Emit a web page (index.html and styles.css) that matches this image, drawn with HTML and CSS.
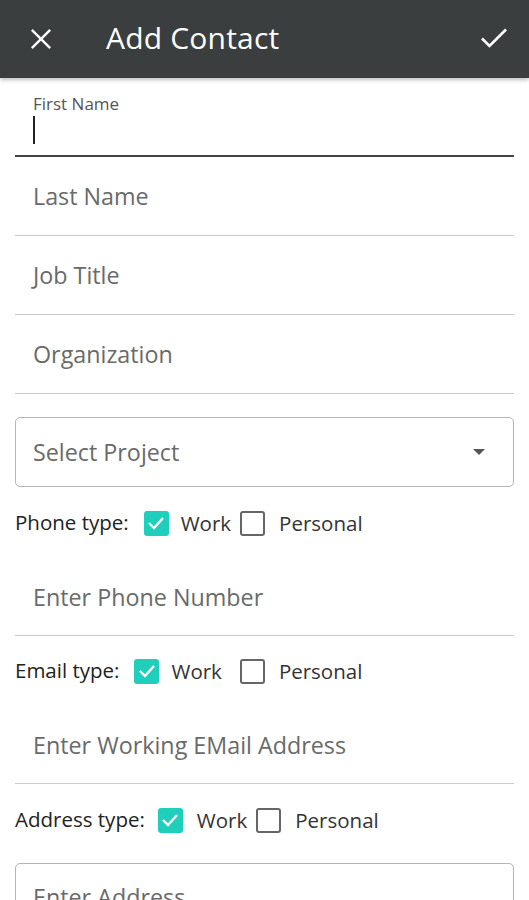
FILE: index.html
```html
<!DOCTYPE html>
<html>
<head>
<meta charset="utf-8">
<link rel="stylesheet" href="styles.css">
</head>
<body>
<header class="appbar">
  <span class="icon-btn close">
    <svg width="24" height="24" viewBox="0 0 24 24"><path d="M2 2 L22 22 M22 2 L2 22" stroke="#fff" stroke-width="2.6" fill="none"/></svg>
  </span>
  <h1 class="title">Add Contact</h1>
  <span class="icon-btn done">
    <svg width="28" height="22" viewBox="0 0 28 22"><path d="M2 11.5 L9.5 19 L26 2.5" stroke="#fff" stroke-width="2.6" fill="none"/></svg>
  </span>
</header>
<main class="form">
  <div class="field active">
    <div class="float-label">First Name</div>
    <div class="caret"></div>
  </div>
  <div class="field"><span class="ph">Last Name</span></div>
  <div class="field"><span class="ph">Job Title</span></div>
  <div class="field"><span class="ph">Organization</span></div>

  <div class="select">
    <span class="ph">Select Project</span>
    <svg class="arrow" width="12" height="6" viewBox="0 0 12 6"><path d="M0 0 L12 0 L6 6 Z" fill="#555"/></svg>
  </div>

  <div class="type-row phone">
    <span class="type-label">Phone type:</span>
    <span class="cb on"><svg width="18" height="14" viewBox="0 0 18 14"><path d="M2 7 L7 12 L16 2" stroke="#fff" stroke-width="2.4" fill="none"/></svg></span>
    <span class="opt work">Work</span>
    <span class="cb off"></span>
    <span class="opt personal">Personal</span>
  </div>
  <div class="field fld2"><span class="ph">Enter Phone Number</span></div>

  <div class="type-row email">
    <span class="type-label">Email type:</span>
    <span class="cb on"><svg width="18" height="14" viewBox="0 0 18 14"><path d="M2 7 L7 12 L16 2" stroke="#fff" stroke-width="2.4" fill="none"/></svg></span>
    <span class="opt work">Work</span>
    <span class="cb off"></span>
    <span class="opt personal">Personal</span>
  </div>
  <div class="field fld2"><span class="ph">Enter Working EMail Address</span></div>

  <div class="type-row address">
    <span class="type-label">Address type:</span>
    <span class="cb on"><svg width="18" height="14" viewBox="0 0 18 14"><path d="M2 7 L7 12 L16 2" stroke="#fff" stroke-width="2.4" fill="none"/></svg></span>
    <span class="opt work">Work</span>
    <span class="cb off"></span>
    <span class="opt personal">Personal</span>
  </div>
  <div class="textarea"><span class="ph">Enter Address</span></div>
</main>
</body>
</html>
```
FILE: styles.css
```css
* { box-sizing: border-box; }
html, body { margin: 0; padding: 0; background: #fff; }
body {
  font-family: "Open Sans", "Noto Sans", sans-serif;
  width: 529px;
  height: 900px;
  overflow: hidden;
}
.appbar {
  height: 78px;
  background: #3b3e3f;
  display: flex;
  align-items: center;
  padding: 0 21px 0 30px;
  box-shadow: 0 2px 4px rgba(0,0,0,0.25);
  position: relative;
}
.icon-btn { display: flex; align-items: center; }
.close svg { width: 22px; height: 22px; }
.title {
  margin: 0 0 0 54px;
  flex: 1;
  color: #fff;
  font-weight: 400;
  font-size: 30px;
  letter-spacing: 0.2px;
  line-height: 1;
  padding-bottom: 2px;
}
.done { padding-bottom: 2px; }
.form { padding: 0 15px; height: 822px; overflow: hidden; }
.field {
  height: 79px;
  border-bottom: 1.5px solid #cbcbcb;
  display: flex;
  align-items: center;
  padding-left: 18px;
}
.field.active {
  flex-direction: column;
  align-items: flex-start;
  justify-content: flex-start;
  border-bottom: 2.5px solid #444;
  padding-top: 15px;
}
.float-label {
  font-size: 17px;
  color: #555;
  line-height: 22px;
}
.caret {
  width: 2px;
  height: 28px;
  background: #222;
  margin-top: 1px;
}
.ph {
  font-size: 23.3px;
  color: #6a6a6a;
}
.select {
  margin-top: 23px;
  height: 70px;
  border: 1.5px solid #b5b5b5;
  border-radius: 5px;
  display: flex;
  align-items: center;
  justify-content: space-between;
  padding: 0 28px 0 17px;
}
.type-row {
  display: flex;
  align-items: center;
  height: 48px;
  margin-top: 12px;
}
.type-label {
  font-size: 20.5px;
  color: #222;
  margin-right: 15px;
  padding-bottom: 3px;
}
.cb {
  width: 25px;
  height: 25px;
  border-radius: 3px;
  display: flex;
  align-items: center;
  justify-content: center;
  flex: none;
}
.cb.on { background: #20cfbb; }
.cb.off { border: 2px solid #666; }
.opt {
  font-size: 20.5px;
  color: #333;
}
.work { margin-left: 12px; margin-right: 9px; }
.personal { margin-left: 14px; }
.email { margin-top: 11px; }
.email .work { margin-right: 18px; }
.address .type-label { margin-right: 13px; }
.address .work { margin-left: 14px; }
.fld2 { margin-top: 12px; height: 77px; }
.textarea {
  margin-top: 19px;
  height: 80px;
  border: 1.5px solid #b5b5b5;
  border-radius: 5px;
  padding: 17px 17px;
}
```
